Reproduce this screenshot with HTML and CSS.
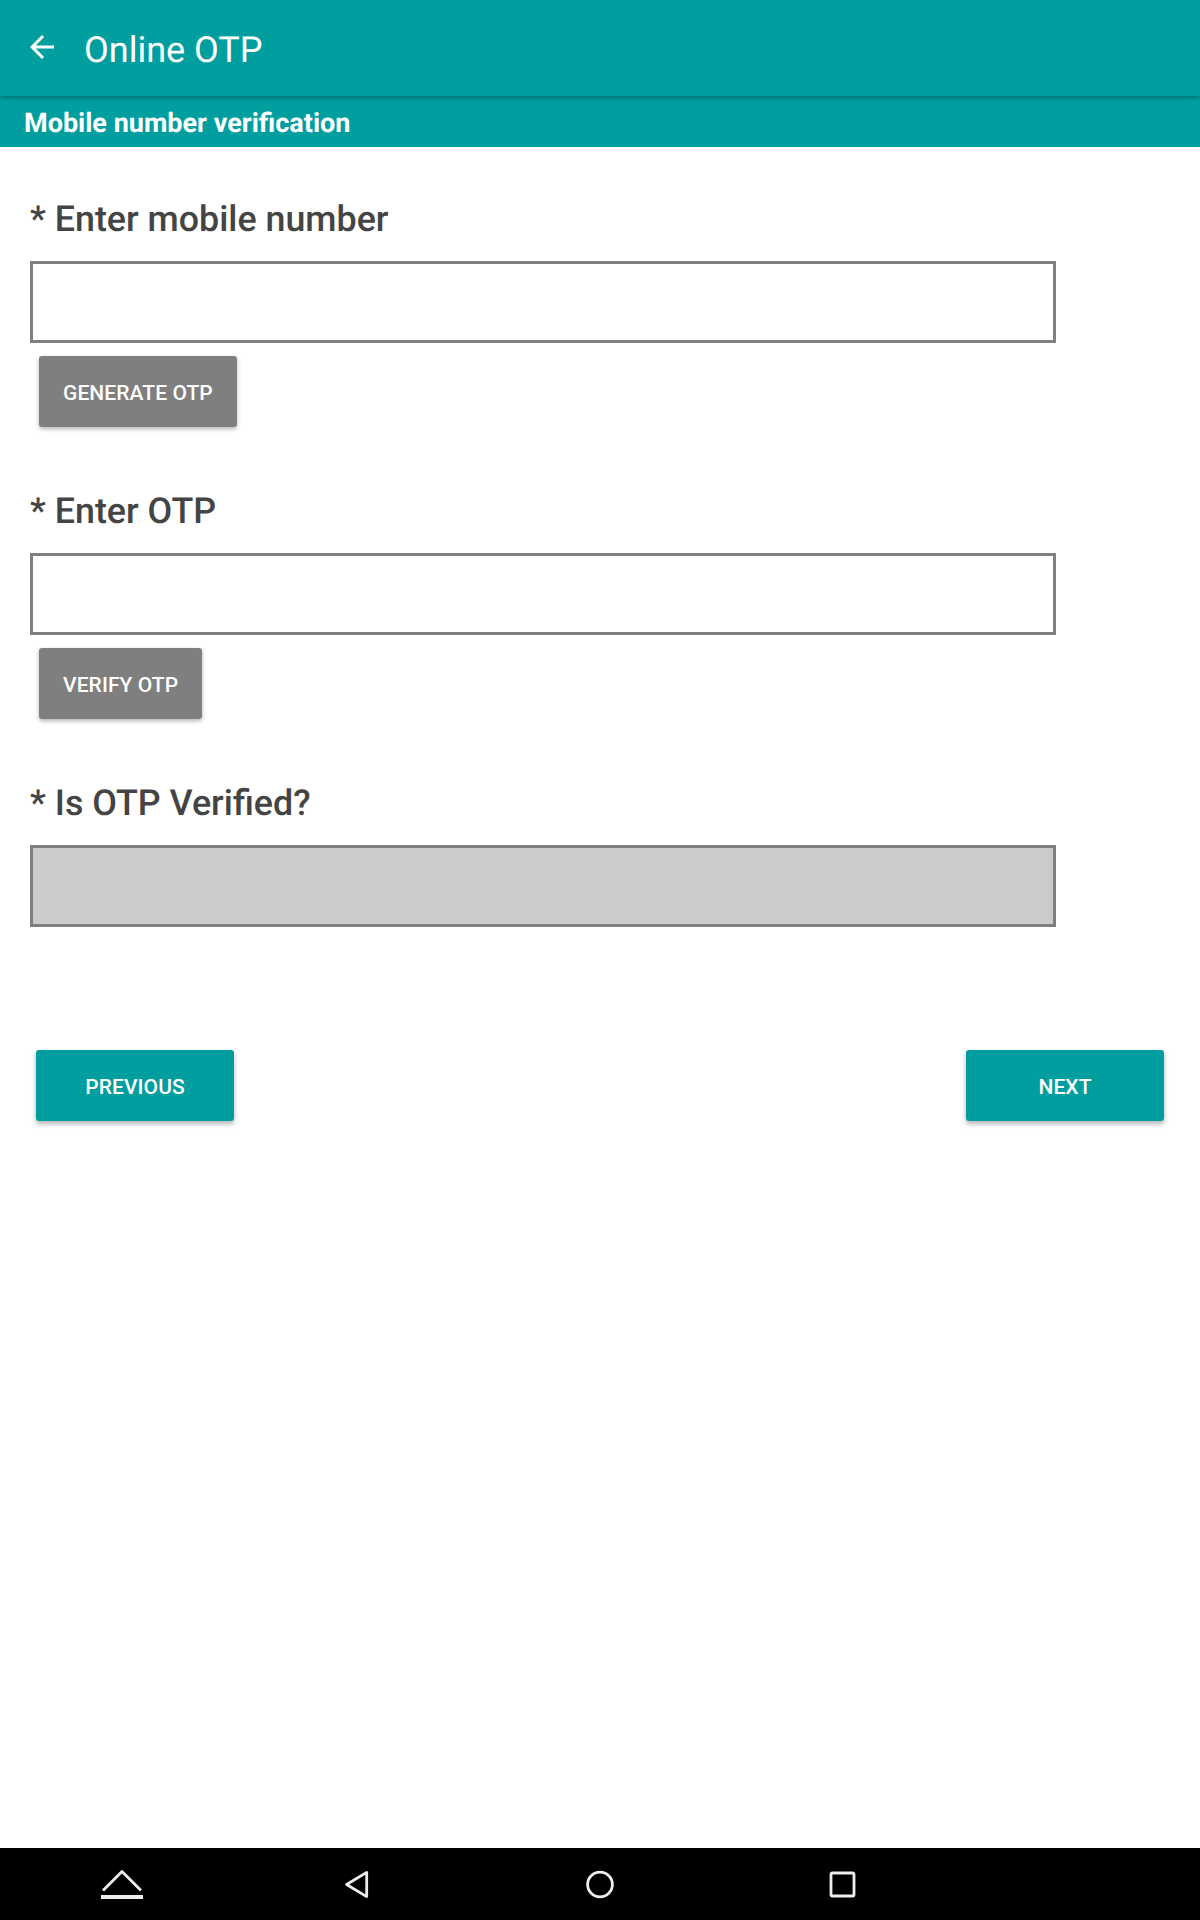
FILE: index.html
```html
<!DOCTYPE html>
<html lang="en">

<head>
    <meta charset="UTF-8">
    <meta name="viewport" content="width=device-width, initial-scale=1.0">
    <title>Online OTP</title>
    <link rel="stylesheet" href="styles.css">
</head>

<body>
    <div class="screen">
        <header class="toolbar">
            <svg class="back-arrow" viewBox="0 0 24 24">
                <path d="M20 11H7.83l5.59-5.59L12 4l-8 8 8 8 1.41-1.41L7.83 13H20v-2z" />
            </svg>
            <h1 class="toolbar-title">Online OTP</h1>
        </header>
        <div class="subheader">Mobile number verification</div>

        <main class="form">
            <section class="field">
                <label class="field-label">* Enter mobile number</label>
                <div class="field-input"></div>
                <button class="btn btn-grey">GENERATE OTP</button>
            </section>
            <section class="field">
                <label class="field-label">* Enter OTP</label>
                <div class="field-input"></div>
                <button class="btn btn-grey">VERIFY OTP</button>
            </section>
            <section class="field">
                <label class="field-label">* Is OTP Verified?</label>
                <div class="field-input disabled"></div>
            </section>
            <div class="form-nav">
                <button class="btn btn-teal">PREVIOUS</button>
                <button class="btn btn-teal">NEXT</button>
            </div>
        </main>

        <footer class="system-bar">
            <svg class="sys-icon sys-menu" viewBox="0 0 44 44">
                <path class="sys-stroke" d="M3 28.5 22 9.5l19 19" />
                <rect class="sys-fill" x="1" y="33" width="42" height="4" />
            </svg>
            <svg class="sys-icon sys-back" viewBox="0 0 44 44">
                <path class="sys-stroke" d="M11.6 22.5 31.7 10.4v24.2z" />
            </svg>
            <svg class="sys-icon sys-home" viewBox="0 0 44 44">
                <circle class="sys-stroke" cx="22" cy="22.5" r="12.4" />
            </svg>
            <svg class="sys-icon sys-recent" viewBox="0 0 44 44">
                <rect class="sys-stroke" x="10" y="11" width="23" height="23" rx="1.5" />
            </svg>
        </footer>
    </div>
</body>

</html>
```

FILE: styles.css
```css
* {
    box-sizing: border-box;
}

body {
    margin: 0;
    background: #fff;
    font-family: Roboto, "Liberation Sans", sans-serif;
    text-rendering: geometricPrecision;
}

.screen {
    display: flex;
    flex-direction: column;
    height: 1920px;
}

.toolbar {
    position: relative;
    display: flex;
    align-items: center;
    height: 96px;
    padding-left: 24px;
    background: #009e9e;
    box-shadow: 0 2px 4px rgba(0, 0, 0, 0.28);
}

.back-arrow {
    width: 36px;
    height: 36px;
    margin-top: -2px;
    fill: #fff;
}

.toolbar-title {
    margin: 4px 0 0 24px;
    font-size: 36px;
    font-weight: 400;
    color: #fff;
}

.subheader {
    height: 51px;
    padding: 9px 0 0 24px;
    background: #009e9e;
    font-size: 27px;
    line-height: 36px;
    font-weight: 700;
    color: #fff;
}

.form {
    flex: 1;
    padding: 46px 36px 0 30px;
}

.field {
    height: 292px;
}

.field-label {
    display: block;
    height: 68px;
    font-size: 35.8px;
    line-height: 52px;
    font-weight: 500;
    color: #444;
}

.field-input {
    width: 1026px;
    height: 82px;
    border: 3px solid #7f7f7f;
    background: #fff;
}

.field-input.disabled {
    background: #cbcbcb;
}

.btn {
    display: block;
    height: 71px;
    padding: 2px 24px 0;
    border: 0;
    border-radius: 3px;
    font-family: inherit;
    font-size: 21px;
    font-weight: 500;
    letter-spacing: 0.08px;
    color: #fff;
}

.btn-grey {
    margin: 13px 0 0 9px;
    background: #7f7f7f;
    box-shadow: 0 2px 4px rgba(0, 0, 0, 0.3);
}

.btn-teal {
    width: 198px;
    background: #009e9e;
    box-shadow: 0 3px 5px rgba(0, 0, 0, 0.3);
}

.form-nav {
    display: flex;
    justify-content: space-between;
    margin: -19px 0 0 6px;
}

.system-bar {
    display: flex;
    align-items: center;
    height: 72px;
    padding-left: 100px;
    background: #000;
}

.sys-icon {
    width: 44px;
    height: 44px;
}

.sys-back {
    margin-left: 191px;
}

.sys-home {
    margin-left: 199px;
}

.sys-recent {
    margin-left: 199px;
}

.sys-stroke {
    fill: none;
    stroke: #eee;
    stroke-width: 2.8;
    stroke-linejoin: round;
}

.sys-fill {
    fill: #eee;
}
```
